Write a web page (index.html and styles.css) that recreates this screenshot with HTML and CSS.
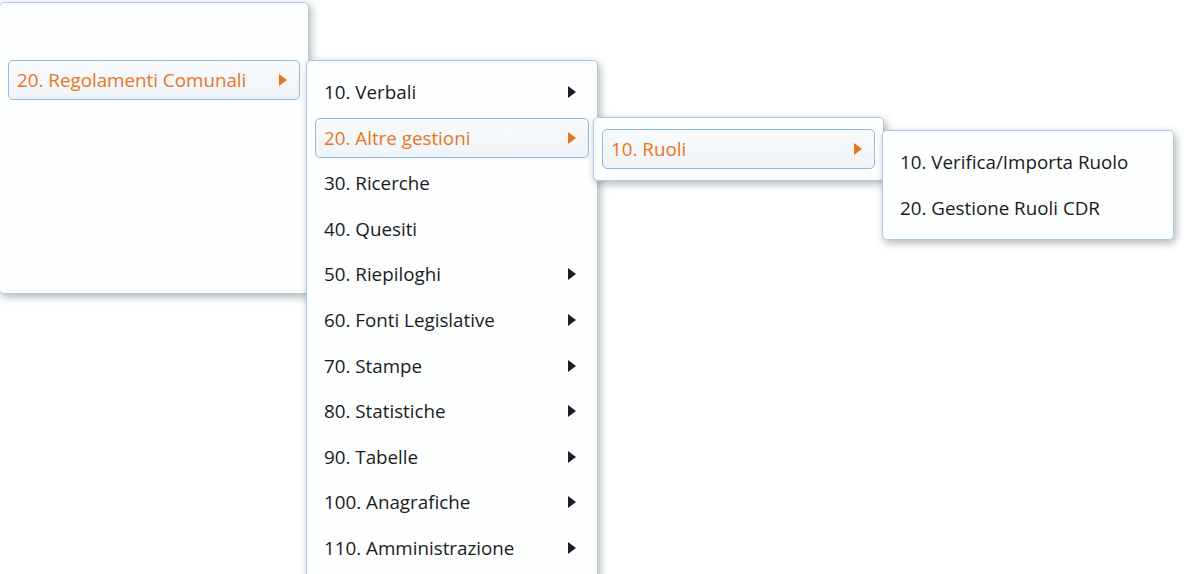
FILE: index.html
```html
<!DOCTYPE html>
<html lang="it">
<head>
  <meta charset="UTF-8" />
  <title>Menu</title>
  <link rel="stylesheet" href="styles.css">
</head>
<body>
  <!-- livello 1 -->
  <ul class="menu lvl1">
    <li class="item blank"></li>
    <li class="item open">20. Regolamenti Comunali<span class="arrow"></span></li>
  </ul>

  <!-- livello 2 -->
  <ul class="menu lvl2">
    <li class="item">10. Verbali<span class="arrow"></span></li>
    <li class="item open">20. Altre gestioni<span class="arrow"></span></li>
    <li class="item">30. Ricerche</li>
    <li class="item">40. Quesiti</li>
    <li class="item">50. Riepiloghi<span class="arrow"></span></li>
    <li class="item">60. Fonti Legislative<span class="arrow"></span></li>
    <li class="item">70. Stampe<span class="arrow"></span></li>
    <li class="item">80. Statistiche<span class="arrow"></span></li>
    <li class="item">90. Tabelle<span class="arrow"></span></li>
    <li class="item">100. Anagrafiche<span class="arrow"></span></li>
    <li class="item">110. Amministrazione<span class="arrow"></span></li>
  </ul>

  <!-- livello 3 -->
  <ul class="menu lvl3">
    <li class="item open">10. Ruoli<span class="arrow"></span></li>
  </ul>

  <!-- livello 4 -->
  <ul class="menu lvl4">
    <li class="item">10. Verifica/Importa Ruolo</li>
    <li class="item">20. Gestione Ruoli CDR</li>
  </ul>
</body>
</html>
```

FILE: styles.css
```css
body {
  margin: 0;
  background: #fff;
  font-family: "Open Sans", "Liberation Sans", sans-serif;
  font-size: 18.8px;
  color: #1a1a22;
  width: 1200px;
  height: 574px;
  overflow: hidden;
  position: relative;
}

.menu {
  position: absolute;
  list-style: none;
  margin: 0;
  padding: 11px 0;
  background: #fdfefe;
  border: 1px solid #a9cbe9;
  border-radius: 5px;
  box-shadow: 2px 3px 8px rgba(0, 0, 0, 0.3);
  box-sizing: border-box;
  display: flex;
  flex-direction: column;
  gap: 5.6px;
}

.lvl1 {
  left: -1px;
  top: 2px;
  width: 310px;
  height: 292px;
}

.lvl2 {
  left: 306px;
  top: 60px;
  width: 292px;
  height: 600px;
}

.lvl3 {
  left: 593px;
  top: 117px;
  width: 291px;
}

.lvl4 {
  left: 882px;
  top: 130px;
  width: 292px;
}

.item {
  height: 40px;
  margin: 0 8px;
  padding: 0 12px 0 8px;
  border: 1px solid transparent;
  border-radius: 5px;
  box-sizing: border-box;
  display: flex;
  align-items: center;
  justify-content: space-between;
  white-space: nowrap;
}

.item.open {
  color: #e8761c;
  border-color: #8dbbe5;
  background: linear-gradient(#f9fbfd, #eff4f8);
}

.arrow {
  width: 0;
  height: 0;
  border-top: 6px solid transparent;
  border-bottom: 6px solid transparent;
  border-left: 8px solid #1c1c2c;
}

.item.open .arrow {
  border-left-color: #e8761c;
}
```
